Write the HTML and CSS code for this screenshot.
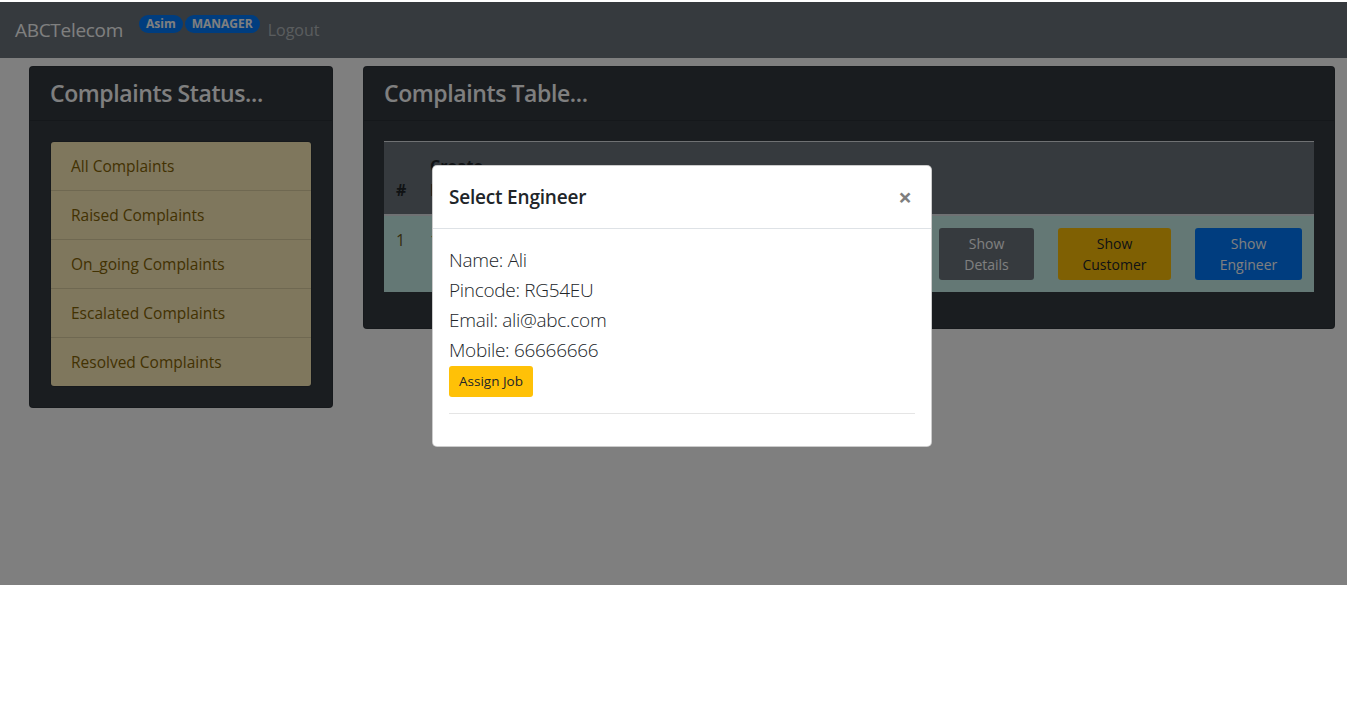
FILE: index.html
```html
<!DOCTYPE html>
<html lang="en">
<head>
<meta charset="utf-8">
<title>ABCTelecom</title>
<link rel="stylesheet" href="styles.css">
</head>
<body>
<div class="page">
  <nav class="navbar">
    <a class="brand" href="#">ABCTelecom</a>
    <div class="badges">
      <span class="badge">Asim</span>
      <span class="badge">MANAGER</span>
    </div>
    <a class="nav-link" href="#">Logout</a>
  </nav>
  <main class="content">
    <section class="card card-side">
      <div class="card-header"><h3 class="card-title">Complaints Status...</h3></div>
      <div class="card-body">
        <ul class="list-group">
          <li class="list-item">All Complaints</li>
          <li class="list-item">Raised Complaints</li>
          <li class="list-item">On_going Complaints</li>
          <li class="list-item">Escalated Complaints</li>
          <li class="list-item">Resolved Complaints</li>
        </ul>
      </div>
    </section>
    <section class="card card-main">
      <div class="card-header"><h3 class="card-title">Complaints Table...</h3></div>
      <div class="card-body">
        <table class="table">
          <colgroup>
            <col class="c-num"><col class="c-date"><col class="c-desc"><col class="c-status">
            <col class="c-b1"><col class="c-b2"><col class="c-b3">
          </colgroup>
          <thead>
            <tr><th>#</th><th>Create Date</th><th>Description</th><th>Status</th><th></th><th></th><th></th></tr>
          </thead>
          <tbody>
            <tr class="row-info">
              <td>1</td><td>1/3/2021</td><td>Internet not working</td><td>Raised</td>
              <td><button class="btn btn-secondary">Show Details</button></td>
              <td><button class="btn btn-warning">Show Customer</button></td>
              <td><button class="btn btn-primary">Show Engineer</button></td>
            </tr>
          </tbody>
        </table>
      </div>
    </section>
  </main>
</div>
<div class="backdrop"></div>
<div class="modal">
  <div class="modal-header">
    <h5 class="modal-title">Select Engineer</h5>
    <span class="close">&times;</span>
  </div>
  <div class="modal-body">
    <p class="info">Name: Ali</p>
    <p class="info">Pincode: RG54EU</p>
    <p class="info">Email: ali@abc.com</p>
    <p class="info">Mobile: 66666666</p>
    <button class="btn btn-warning btn-assign">Assign Job</button>
    <hr class="sep">
  </div>
</div>
</body>
</html>
```
FILE: styles.css
```css
* { box-sizing: border-box; }
html, body { margin: 0; padding: 0; background: #fff; }
body {
  padding-top: 2px;
  font-family: "Open Sans", "Noto Sans", sans-serif;
  font-size: 16px;
  line-height: 1.5;
  color: #212529;
  position: relative;
  height: 727px;
  overflow: hidden;
}
.page { width: 1347px; }

.navbar {
  display: flex;
  align-items: center;
  height: 56px;
  padding: 8px 16px 8px 15px;
  background: #6c757d;
}
.brand {
  font-size: 19px;
  line-height: 30px;
  padding: 5px 0;
  margin-right: 16px;
  color: #fff;
  text-decoration: none;
  letter-spacing: -0.3px;
}
.badges {
  display: flex;
  gap: 2px;
  align-self: flex-start;
  margin-top: 5px;
}
.badge {
  display: inline-block;
  font-size: 12px;
  font-weight: 700;
  line-height: 1;
  padding: 3px 7px 3px;
  border-radius: 10px;
  background: #007bff;
  color: #fff;
}
.nav-link {
  padding: 8px;
  color: rgba(255,255,255,.5);
  text-decoration: none;
  font-size: 16px;
}

.content {
  display: flex;
  align-items: flex-start;
  gap: 30px;
  padding: 8px 0 0 29px;
}
.card {
  background: #343a40;
  border: 1px solid rgba(0,0,0,.125);
  border-radius: 4px;
}
.card-side { width: 304px; }
.card-main { width: 972px; }
.card-header {
  padding: 12px 20px;
  background: rgba(0,0,0,.03);
  border-bottom: 1px solid rgba(0,0,0,.125);
}
.card-title {
  margin: 0;
  font-size: 23px;
  font-weight: 600;
  line-height: 29px;
  color: #fff;
  letter-spacing: -0.4px;
}
.card-body { padding: 20px; }

.list-group {
  list-style: none;
  margin: 0;
  padding: 0;
  border-radius: 4px;
  overflow: hidden;
  border: 1px solid rgba(0,0,0,.125);
}
.list-item {
  padding: 12px 20px;
  background: #ffeeba;
  color: #856404;
  line-height: 24px;
  font-size: 15.5px;
}
.list-item + .list-item { border-top: 1px solid rgba(0,0,0,.125); }

.table {
  width: 930px;
  border-collapse: collapse;
  table-layout: fixed;
  margin-bottom: 16px;
  color: #212529;
}
.c-num { width: 34px; }
.c-date { width: 84px; }
.c-desc { width: 280px; }
.c-status { width: 145px; }
.c-b1 { width: 119px; }
.c-b2 { width: 137px; }
.c-b3 { width: 131px; }
.table th, .table td {
  padding: 12px;
  text-align: left;
  vertical-align: bottom;
  border-top: 1px solid #dee2e6;
}
.table thead th {
  background: #6c757d;
  border-bottom: 2px solid #dee2e6;
  font-weight: 700;
  line-height: 24px;
}
.table td { vertical-align: top; line-height: 24px; border-top: 0; }
.row-info td { background: #c8f0eb; color: #6b5a1a; }

.btn {
  display: block;
  width: 100%;
  font-family: inherit;
  font-size: 14px;
  line-height: 21px;
  padding: 4px 8px;
  border: 1px solid transparent;
  border-radius: 3px;
  text-align: center;
  cursor: pointer;
}
.btn-secondary { background: #6c757d; color: #fff; }
.btn-warning { background: #ffc107; color: #212529; }
.btn-primary { background: #007bff; color: #fff; }

.backdrop {
  position: absolute;
  top: 2px;
  left: 0;
  width: 1347px;
  height: 583px;
  background: rgba(0,0,0,.5);
}

.modal {
  position: absolute;
  top: 165px;
  left: 432px;
  width: 500px;
  background: #fff;
  border: 1px solid rgba(0,0,0,.2);
  border-radius: 5px;
}
.modal-header {
  display: flex;
  align-items: flex-start;
  justify-content: space-between;
  padding: 16px;
  border-bottom: 1px solid #dee2e6;
}
.modal-title {
  margin: 0;
  font-size: 19px;
  font-weight: 600;
  line-height: 30px;
  color: #212529;
  letter-spacing: -0.2px;
}
.close {
  font-size: 24px;
  font-weight: 700;
  line-height: 30px;
  color: #000;
  opacity: .5;
  margin-right: 3px;
}
.modal-body { padding: 16px; }
.info {
  margin: 0;
  font-size: 19px;
  font-weight: 300;
  line-height: 30px;
  color: #212529;
  letter-spacing: -0.3px;
}
.btn-assign {
  display: inline-block;
  width: auto;
  margin-top: 1px;
  padding: 4px 9px;
  font-size: 13.5px;
}
.sep {
  margin: 16px 0 16px;
  border: 0;
  border-top: 1px solid rgba(0,0,0,.1);
}
```
